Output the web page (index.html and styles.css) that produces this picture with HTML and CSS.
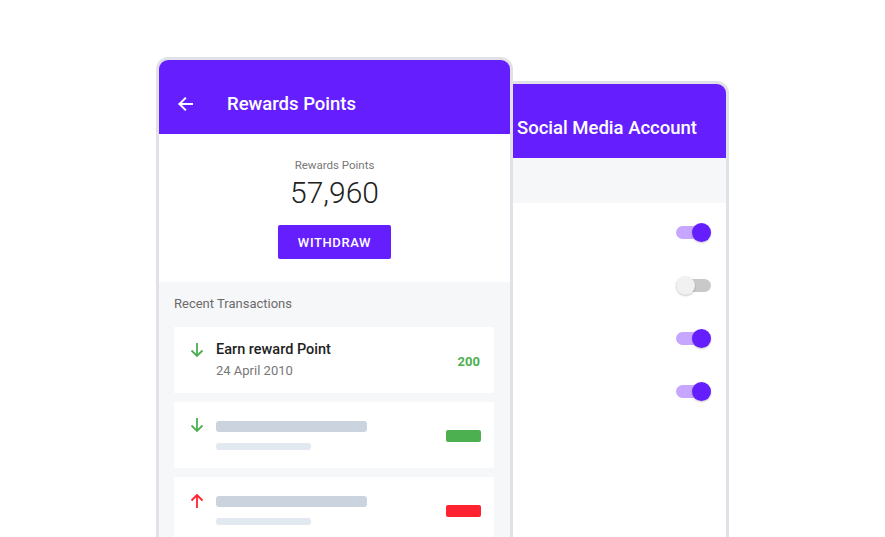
FILE: index.html
```html
<!DOCTYPE html>
<html lang="en">
<head>
<meta charset="utf-8">
<title>Rewards Points</title>
<link rel="stylesheet" href="styles.css">
</head>
<body>
<div class="stage">
  <section class="phone phone-back">
    <header class="bar">
      <span class="bar-title back-title">Social Media Account</span>
    </header>
    <div class="back-strip"></div>
    <ul class="toggles">
      <li class="toggle-row"><span class="toggle on"><span class="knob"></span></span></li>
      <li class="toggle-row"><span class="toggle off"><span class="knob"></span></span></li>
      <li class="toggle-row"><span class="toggle on"><span class="knob"></span></span></li>
      <li class="toggle-row"><span class="toggle on"><span class="knob"></span></span></li>
    </ul>
  </section>

  <section class="phone phone-front">
    <header class="bar">
      <svg class="back-icon" viewBox="0 0 16 16" width="16" height="16" aria-hidden="true">
        <path d="M15 8H2.5M8.2 2.3 2.5 8l5.7 5.7" fill="none" stroke="#fff" stroke-width="2" stroke-linecap="square"/>
      </svg>
      <span class="bar-title">Rewards Points</span>
    </header>
    <div class="summary">
      <div class="summary-label">Rewards Points</div>
      <div class="summary-value">57,960</div>
      <button class="btn">WITHDRAW</button>
    </div>
    <div class="recent">
      <div class="recent-title">Recent Transactions</div>
      <div class="card">
        <svg class="arrow" viewBox="0 0 16 16" width="16" height="16" aria-hidden="true">
          <path d="M8 1v13M2.5 8.5 8 14l5.5-5.5" fill="none" stroke="#4caf50" stroke-width="1.8"/>
        </svg>
        <div class="card-text">
          <div class="card-title">Earn reward Point</div>
          <div class="card-date">24 April 2010</div>
        </div>
        <div class="amount">200</div>
      </div>
      <div class="card">
        <svg class="arrow" viewBox="0 0 16 16" width="16" height="16" aria-hidden="true">
          <path d="M8 1v13M2.5 8.5 8 14l5.5-5.5" fill="none" stroke="#4caf50" stroke-width="1.8"/>
        </svg>
        <div class="card-text">
          <div class="ph ph-line"></div>
          <div class="ph ph-sub"></div>
        </div>
        <div class="pill pill-green"></div>
      </div>
      <div class="card">
        <svg class="arrow arrow-up" viewBox="0 0 16 16" width="16" height="16" aria-hidden="true">
          <path d="M8 15V2M2.5 7.5 8 2l5.5 5.5" fill="none" stroke="#ff2230" stroke-width="1.8"/>
        </svg>
        <div class="card-text">
          <div class="ph ph-line"></div>
          <div class="ph ph-sub"></div>
        </div>
        <div class="pill pill-red"></div>
      </div>
    </div>
  </section>
</div>
</body>
</html>
```

FILE: styles.css
```css
* { box-sizing: border-box; }

html, body {
  margin: 0;
  padding: 0;
  background: #fff;
  font-family: Roboto, "Noto Sans", Arial, sans-serif;
}

.stage {
  position: relative;
  width: 885px;
  height: 537px;
  overflow: hidden;
}

.phone {
  position: absolute;
  background: #fff;
  border: 3px solid #e1e2e8;
  border-radius: 12px 12px 0 0;
  overflow: hidden;
  display: flex;
  flex-direction: column;
}

.phone-front {
  left: 156px;
  top: 57px;
  width: 357px;
  height: 520px;
  z-index: 2;
}

.phone-back {
  left: 446px;
  top: 81px;
  width: 283px;
  height: 500px;
  z-index: 1;
}

.bar {
  height: 74px;
  flex: none;
  background: #651fff;
  display: flex;
  align-items: center;
  padding-left: 18px;
  padding-top: 14px;
  color: #fff;
}

.back-icon {
  display: block;
  margin-right: 34px;
}

.bar-title {
  font-size: 18.5px;
  font-weight: 500;
}

.back-title {
  margin-left: 50px;
}

.back-strip {
  height: 45px;
  background: #f6f7f9;
  flex: none;
}

.toggles {
  list-style: none;
  margin: 0;
  padding: 3px 0 0;
}

.toggle-row {
  height: 53px;
  display: flex;
  align-items: center;
  justify-content: flex-end;
  padding-right: 15px;
}

.toggle {
  position: relative;
  width: 35px;
  height: 13px;
  border-radius: 7px;
  display: block;
}

.toggle.on { background: #c7a6ff; }
.toggle.off { background: #c9c9c9; }

.knob {
  position: absolute;
  top: -3px;
  width: 19px;
  height: 19px;
  border-radius: 50%;
  box-shadow: 0 1px 2px rgba(0, 0, 0, 0.22);
}

.toggle.on .knob { right: 0; background: #651fff; }
.toggle.off .knob { left: 0; background: #f1f1f1; }

.summary {
  height: 148px;
  flex: none;
  display: flex;
  flex-direction: column;
  align-items: center;
  padding-top: 24px;
}

.summary-label {
  font-size: 11.5px;
  color: #777;
  line-height: 14px;
}

.summary-value {
  font-size: 30px;
  font-weight: 300;
  color: #222;
  line-height: 36px;
  margin-top: 3px;
}

.btn {
  margin-top: 14px;
  width: 113px;
  height: 34px;
  border: 0;
  border-radius: 2px;
  background: #651fff;
  color: #fff;
  font-family: inherit;
  font-size: 13px;
  font-weight: 500;
  letter-spacing: 0.6px;
  padding: 0;
}

.recent {
  flex: 1;
  background: #f6f7f9;
  padding: 14px 16px 0 15px;
}

.recent-title {
  font-size: 13px;
  color: #6b6b6b;
  line-height: 16px;
  margin-bottom: 15px;
}

.card {
  background: #fff;
  height: 66px;
  margin-bottom: 9px;
  display: flex;
  align-items: flex-start;
  padding: 15px 13px 0 15px;
  position: relative;
}

.arrow {
  display: block;
  margin-right: 11px;
  flex: none;
}

.arrow-up {
  margin-top: 1px;
}

.card-text {
  flex: 1;
}

.card-title {
  font-size: 14.5px;
  font-weight: 500;
  color: #222;
  line-height: 18px;
  margin-top: -1px;
}

.card-date {
  font-size: 13px;
  color: #777;
  line-height: 16px;
  margin-top: 4px;
}

.amount {
  font-size: 13px;
  font-weight: 700;
  color: #4caf50;
  align-self: center;
  margin-top: -13px;
  margin-right: 1px;
}

.ph {
  border-radius: 3px;
}

.ph-line {
  width: 151px;
  height: 11px;
  background: #cbd4de;
  margin-top: 4px;
}

.ph-sub {
  width: 95px;
  height: 7px;
  background: #e2e8f0;
  margin-top: 11px;
}

.pill {
  width: 35px;
  height: 12px;
  border-radius: 2px;
  align-self: center;
  margin-top: -13px;
}

.pill-green { background: #4caf50; }
.pill-red { background: #ff2230; }
```
